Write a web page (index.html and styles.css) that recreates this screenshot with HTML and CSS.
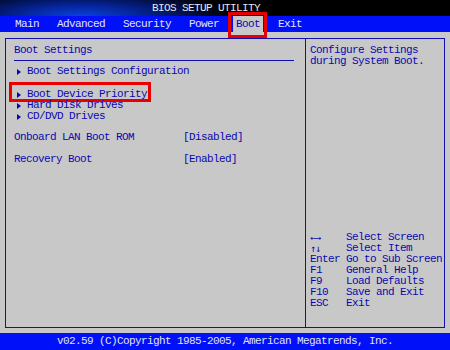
FILE: index.html
```html
<!DOCTYPE html>
<html>
<head>
    <meta charset="utf-8">
    <title>BIOS SETUP UTILITY</title>
    <link rel="stylesheet" href="styles.css">
</head>
<body>

<div id="title">BIOS SETUP UTILITY</div>

<div id="menu">
    <span class="tab">Main</span>
    <span class="tab">Advanced</span>
    <span class="tab">Security</span>
    <span class="tab">Power</span>
    <span class="tab active">Boot<span class="mark mark-tab"></span></span>
    <span class="tab">Exit</span>
</div>

<div id="screen">
    <div class="panel">
        <div class="settings">
            <div class="heading">Boot Settings</div>

            <div class="item first"><span class="arrow"></span>Boot Settings Configuration</div>

            <div class="item gap"><span class="arrow"></span>Boot Device Priority<span class="mark mark-item"></span></div>
            <div class="item"><span class="arrow"></span>Hard Disk Drives</div>
            <div class="item"><span class="arrow"></span>CD/DVD Drives</div>

            <div class="option">
                <span>Onboard LAN Boot ROM</span>
                <span>[Disabled]</span>
            </div>
            <div class="option last">
                <span>Recovery Boot</span>
                <span>[Enabled]</span>
            </div>
        </div>

        <div class="help">
            <div class="help-text">Configure Settings<br>during System Boot.</div>

            <div class="keys">
                <span class="arrows">&larr;&rarr;</span><span>Select Screen</span>
                <span class="arrows">&uarr;&darr;</span><span>Select Item</span>
                <span>Enter</span><span>Go to Sub Screen</span>
                <span>F1</span><span>General Help</span>
                <span>F9</span><span>Load Defaults</span>
                <span>F10</span><span>Save and Exit</span>
                <span>ESC</span><span>Exit</span>
            </div>
        </div>
    </div>
</div>

<div id="footer">v02.59 (C)Copyright 1985-2005, American Megatrends, Inc.</div>

</body>
</html>
```

FILE: styles.css
```css
body {
    margin: 0;
    width: 450px;
    height: 350px;
    background-color: #c8c8c8;
    font-family: "Liberation Mono", "DejaVu Sans Mono", monospace;
    font-size: 11px;
    letter-spacing: -0.6px;
    line-height: 11px;
    color: #0808b0;
    display: flex;
    flex-direction: column;
    overflow: hidden;
}

#title {
    height: 16px;
    line-height: 17px;
    padding-left: 152px;
    color: #e8e8e8;
    background: radial-gradient(ellipse 150px 28px at 80px 16px, #0a40e0 0%, #04208c 45%, #000000 100%);
    background-color: #000;
}

#menu {
    height: 16px;
    background-color: #0010f8;
    display: flex;
    align-items: stretch;
    padding-left: 12px;
}

.tab {
    position: relative;
    padding: 0 3px;
    margin-right: 12px;
    line-height: 17px;
    color: #e4e4ec;
}

.tab.active {
    background-color: #c8c8c8;
    color: #0808b0;
    margin-left: -1px;
}

.mark {
    position: absolute;
    border: 3px solid #e80000;
    box-sizing: border-box;
}

.mark-tab {
    left: -5px;
    top: -4px;
    width: 39px;
    height: 26px;
}

.mark-item {
    left: -5px;
    top: -7px;
    width: 142px;
    height: 20px;
}

#screen {
    flex: 1;
    padding: 6px 5px 5px 5px;
    display: flex;
}

.panel {
    flex: 1;
    display: flex;
    border: 1px solid #1010b0;
}

.settings {
    width: 280px;
    padding: 6px 11px 0 8px;
    border-right: 1px solid #1010b0;
}

.heading {
    padding-bottom: 4px;
    border-bottom: 1px solid #1010b0;
}

.item {
    position: relative;
    padding-left: 3px;
    display: flex;
    align-items: center;
}

.item.first {
    margin-top: 5px;
}

.item.gap {
    margin-top: 12px;
}

.arrow {
    display: inline-block;
    width: 0;
    height: 0;
    border-left: 4px solid #0808b0;
    border-top: 3.5px solid transparent;
    border-bottom: 3.5px solid transparent;
    margin-right: 6px;
}

.option {
    display: grid;
    grid-template-columns: 169px auto;
    margin-top: 10px;
}

.option.last {
    margin-top: 11px;
}

.help {
    flex: 1;
    padding: 6px 0 18px 4px;
    display: flex;
    flex-direction: column;
}

.keys {
    margin-top: auto;
    display: grid;
    grid-template-columns: 36px auto;
}

.arrows {
    font-family: "DejaVu Sans Mono", monospace;
    font-size: 10px;
    letter-spacing: -1px;
}

#footer {
    height: 17px;
    line-height: 17px;
    background-color: #0010f8;
    color: #e4e4ec;
    text-align: center;
}
```
